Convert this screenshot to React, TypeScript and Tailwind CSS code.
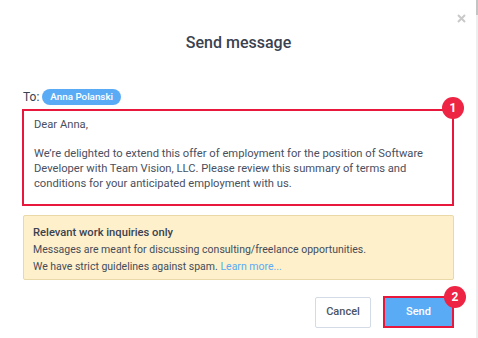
function Badge({ n, className }: { n: string; className: string }) {
  return (
    <span
      className={`absolute flex h-[22px] w-[22px] items-center justify-center rounded-full bg-[#ee2444] text-[12px] font-bold leading-none text-white ${className}`}
    >
      {n}
    </span>
  )
}

export default function App() {
  return (
    <div className="flex h-[338px] w-[478px] bg-white font-['Roboto',sans-serif] text-[#454c59]">
      <div className="relative flex flex-1 flex-col pl-[23px] pr-[22px]">
        <button className="absolute right-[10px] top-[14px] text-[#c9c9c9]" aria-label="Close">
          <svg width="9" height="9" viewBox="0 0 9 9">
            <path d="M1 1L8 8M8 1L1 8" stroke="currentColor" strokeWidth="2" />
          </svg>
        </button>

        <h2 className="mt-[33px] text-center text-[16px] font-medium leading-[20px] text-[#3a4250]">
          Send message
        </h2>

        <div className="mt-[35px] flex items-center gap-[3px] text-[12px]">
          <span className="text-[#3a4250]">To:</span>
          <span className="flex h-[16px] items-center rounded-full bg-[#5aabf5] px-[8px] text-[9.8px] font-medium text-white">
            Anna Polanski
          </span>
        </div>

        <div className="relative ml-[-1px] mt-[3px] h-[97px] border-2 border-[#e8183c] pl-[10px] pr-[8px] pt-[6px] text-[11.2px] leading-[15px] text-[#4a5060]">
          <p>Dear Anna,</p>
          <p className="mt-[14px]">
            We’re delighted to extend this offer of employment for the position of Software
            Developer with Team Vision, LLC. Please review this summary of terms and
            conditions for your anticipated employment with us.
          </p>
          <Badge n="1" className="-right-[12px] -top-[14px]" />
        </div>

        <div className="mt-[9px] h-[65px] rounded-[2px] border border-[#ead9a8] bg-[#fdf0cb] px-[9px] pt-[8px] text-[10.5px] leading-[17px] text-[#454c59]">
          <p className="text-[11.2px] font-medium text-[#3a4250]">Relevant work inquiries only</p>
          <p>Messages are meant for discussing consulting/freelance opportunities.</p>
          <p>
            We have strict guidelines against spam.{' '}
            <a className="text-[#5aabf5]">Learn more...</a>
          </p>
        </div>

        <div className="mt-[16px] flex items-end justify-end gap-[12px]">
          <button className="h-[31px] w-[56px] rounded-[2px] border border-[#d3dbe6] bg-white text-[11px] font-medium text-[#4d5563]">
            Cancel
          </button>
          <div className="relative">
            <button className="block h-[32px] w-[71px] border-2 border-[#e8183c] bg-[#5aabf5] text-[11px] font-medium text-white">
              Send
            </button>
            <Badge n="2" className="-right-[12px] -top-[10px]" />
          </div>
        </div>
      </div>
      <div className="flex w-[2px] flex-col bg-[#eeeeee]">
        <div className="h-[15px] bg-[#c4c4c4]" />
      </div>
    </div>
  )
}
